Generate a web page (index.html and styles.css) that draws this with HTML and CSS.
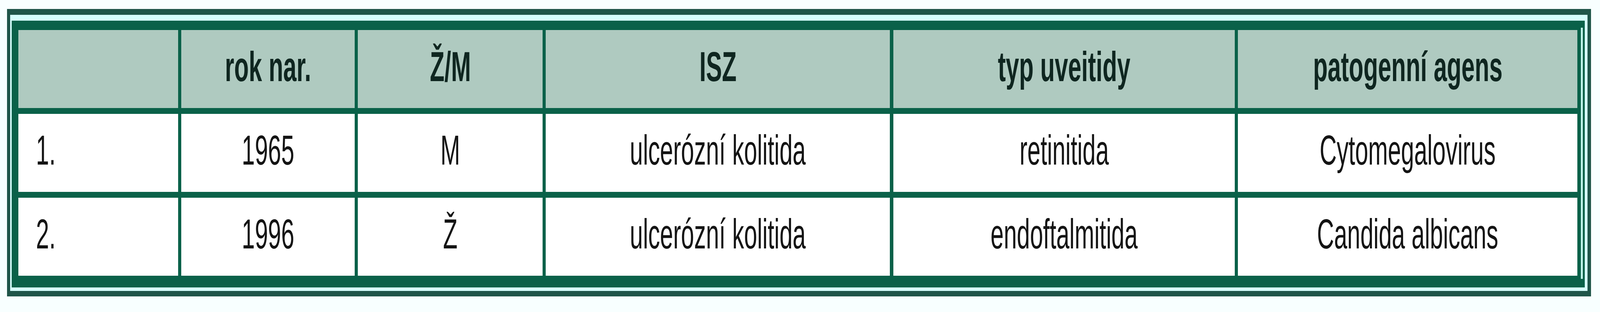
FILE: index.html
```html
<!DOCTYPE html>
<html lang="cs">
<head>
<meta charset="utf-8">
<title>Tabulka</title>
<link rel="stylesheet" href="styles.css">
</head>
<body>
<div class="frame">
  <div class="grid">
    <div class="cell head first"></div>
    <div class="cell head"><span class="t">rok nar.</span></div>
    <div class="cell head"><span class="t">Ž/M</span></div>
    <div class="cell head"><span class="t">ISZ</span></div>
    <div class="cell head"><span class="t">typ uveitidy</span></div>
    <div class="cell head"><span class="t">patogenní agens</span></div>

    <div class="cell first"><span class="t">1.</span></div>
    <div class="cell"><span class="t">1965</span></div>
    <div class="cell"><span class="t">M</span></div>
    <div class="cell"><span class="t">ulcerózní kolitida</span></div>
    <div class="cell"><span class="t">retinitida</span></div>
    <div class="cell"><span class="t">Cytomegalovirus</span></div>

    <div class="cell first"><span class="t">2.</span></div>
    <div class="cell"><span class="t">1996</span></div>
    <div class="cell"><span class="t">Ž</span></div>
    <div class="cell"><span class="t">ulcerózní kolitida</span></div>
    <div class="cell"><span class="t">endoftalmitida</span></div>
    <div class="cell"><span class="t">Candida albicans</span></div>
  </div>
</div>
</body>
</html>
```
FILE: styles.css
```css
/* Horizontal measures are the reference's (7246px wide) times 0.5652,
   to fit the 4096px window; vertical measures are unchanged. */
html, body {
  margin: 0;
  padding: 0;
  background: #f8ffff;
}
body {
  padding: 23px 0 0 17.52px;
  font-family: "Liberation Sans", Arial, sans-serif;
}
.frame {
  display: inline-block;
  border-style: solid;
  border-color: #1f5549;
  border-width: 15px 9.61px 14px 8.48px;
  background: #d6fefd;
  padding: 15px 7.35px 9px 4.52px;
}
.grid {
  display: grid;
  grid-template-columns: 408.7px 443.7px 472.5px 881.2px 873.8px 869.3px;
  grid-template-rows: 200px 200px 200px;
  row-gap: 15px;
  column-gap: 8.48px;
  background-color: #0a6149;
  background-image: linear-gradient(to left, #0a6149 5.09px, #bff3ea 5.09px, #bff3ea 9.61px, transparent 9.61px);
  background-size: 100% calc(100% - 40px);
  background-position: 0 18px;
  background-repeat: no-repeat;
  padding: 24px 18.09px 30px 16.96px;
}
.cell {
  background: #ffffff;
  color: #141414;
  font-size: 107px;
  display: flex;
  align-items: center;
  justify-content: center;
  padding-bottom: 14px;
  box-sizing: border-box;
  white-space: nowrap;
}
.cell.head {
  background: #afcac0;
  color: #0f2620;
  font-weight: bold;
  font-size: 108px;
}
.cell.first {
  justify-content: flex-start;
  padding-left: 45.2px;
}
.t {
  display: inline-block;
  transform: scaleX(0.5652);
  transform-origin: 50% 50%;
}
.first .t {
  transform-origin: 0 50%;
}
```
